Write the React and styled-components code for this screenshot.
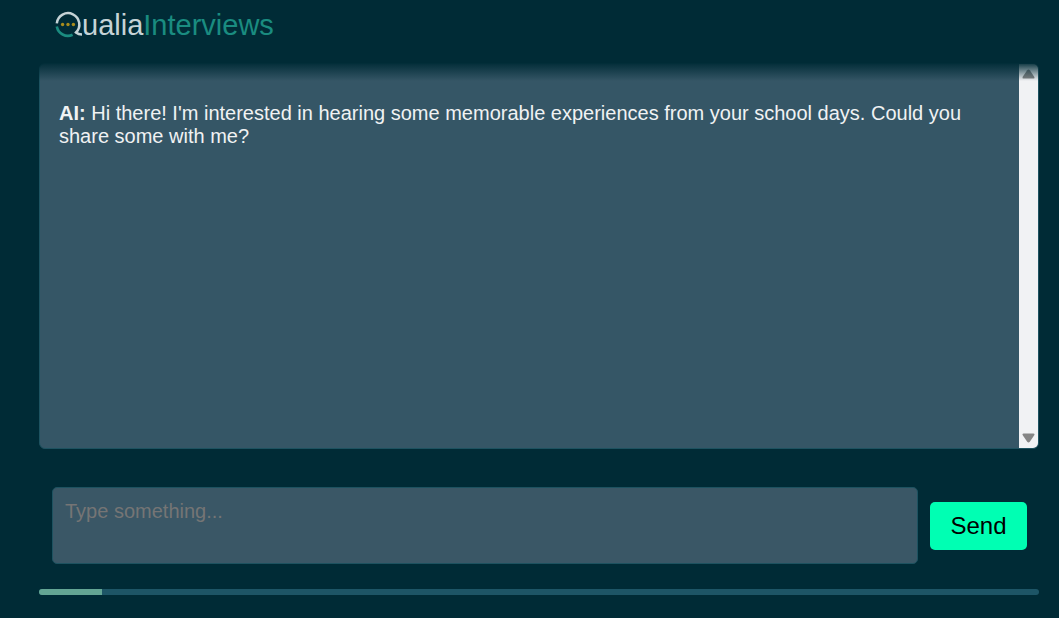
import React, { useState } from 'react';
import styled, { createGlobalStyle } from 'styled-components';

const GlobalStyle = createGlobalStyle`
  * {
    box-sizing: border-box;
  }
  body {
    margin: 0;
    background-color: #002b36;
    font-family: "Liberation Sans", Arial, sans-serif;
  }
`;

const Page = styled.div`
  display: flex;
  flex-direction: column;
  height: 100vh;
  padding: 0 20px 23px 39px;
`;

const Header = styled.header`
  display: flex;
  flex-shrink: 0;
  height: 63px;
  padding: 9px 15px;
`;

const Logo = styled.a`
  display: flex;
  align-items: flex-start;
  font-size: 29px;
  line-height: 32px;
  text-decoration: none;
  color: #c5d3d6;
`;

const LogoMark = styled.svg`
  width: 28px;
  height: 32px;
`;

const LogoAccent = styled.span`
  color: #1a8c80;
`;

const ChatArea = styled.main`
  position: relative;
  display: flex;
  flex: 1;
  min-height: 0;
`;

const ChatPanel = styled.div`
  display: flex;
  flex: 1;
  min-width: 0;
  border: 1px solid #1d5260;
  border-radius: 6px;
  background-color: #355666;
  overflow: hidden;
`;

const TopFade = styled.div`
  position: absolute;
  top: 0;
  left: 0;
  right: 0;
  height: 18px;
  background: linear-gradient(to bottom, rgba(0, 43, 54, 0.95), rgba(0, 43, 54, 0));
`;

const Messages = styled.div`
  flex: 1;
  min-width: 0;
  padding: 38px 19px;
  overflow: hidden;
`;

const Message = styled.p`
  margin: 0;
  font-size: 20px;
  line-height: 23px;
  color: #f0f2f3;
`;

const ScrollTrack = styled.div`
  display: flex;
  flex-direction: column;
  justify-content: space-between;
  align-items: center;
  width: 19px;
  padding: 5px 0;
  background-color: #f1f2f4;
`;

const Arrow = styled.svg`
  width: 13px;
  height: 10px;
  fill: #858585;
`;

const InputForm = styled.form`
  display: flex;
  flex-shrink: 0;
  align-items: center;
  gap: 12px;
  margin: 38px 12px 25px 13px;
`;

const TextArea = styled.textarea`
  flex: 1;
  min-width: 0;
  height: 77px;
  padding: 12px;
  border: 1px solid #1d5260;
  border-radius: 5px;
  background-color: #3a5766;
  color: #f0f2f3;
  font-family: inherit;
  font-size: 20px;
  line-height: 23px;
  resize: none;
  &::placeholder {
    color: #757575;
  }
`;

const SendButton = styled.button`
  min-width: 97px;
  height: 48px;
  padding: 0 20px;
  border: none;
  border-radius: 5px;
  background-color: #00ffb3;
  color: #000;
  font-family: inherit;
  font-size: 24px;
  line-height: 28px;
  cursor: pointer;
`;

const ProgressTrack = styled.div`
  flex-shrink: 0;
  height: 6px;
  border-radius: 3px;
  background-color: #1d5566;
  overflow: hidden;
`;

const ProgressFill = styled.div`
  height: 100%;
  background-color: #63a594;
`;

const QualiaLogo = () => (
  <Logo href="#" aria-label="QualiaInterviews">
    <LogoMark viewBox="0 0 28 32" fill="none">
      <path d="M2.8 14.3 A11.3 11.3 0 1 1 22 23.5 Q24.4 25.6 28 25.6" stroke="#c5d3d6" strokeWidth="2.5" />
      <path d="M2.8 17.5 A11.3 11.3 0 0 0 18.6 25.8" stroke="#1a8c80" strokeWidth="2.6" />
      <circle cx="8.6" cy="15.5" r="1.7" fill="#a88c1c" />
      <circle cx="14" cy="15.5" r="1.7" fill="#a88c1c" />
      <circle cx="19.4" cy="15.5" r="1.7" fill="#a88c1c" />
    </LogoMark>
    <span>ualia</span>
    <LogoAccent>Interviews</LogoAccent>
  </Logo>
);

const App = () => {
  const [text, setText] = useState('');
  const progress = 6.3;

  return (
    <>
      <GlobalStyle />
      <Page>
        <Header>
          <QualiaLogo />
        </Header>
        <ChatArea>
          <ChatPanel>
            <Messages>
              <Message>
                <strong>AI:</strong> Hi there! I'm interested in hearing some memorable experiences
                from your school days. Could you share some with me?
              </Message>
            </Messages>
            <ScrollTrack aria-hidden="true">
              <Arrow viewBox="0 0 13 10"><path d="M6.5 0.5 Q7.2 0.5 7.8 1.3 L12.4 8 Q13 9.5 11.5 9.5 H1.5 Q0 9.5 0.6 8 L5.2 1.3 Q5.8 0.5 6.5 0.5Z" /></Arrow>
              <Arrow viewBox="0 0 13 10"><path d="M6.5 9.5 Q7.2 9.5 7.8 8.7 L12.4 2 Q13 0.5 11.5 0.5 H1.5 Q0 0.5 0.6 2 L5.2 8.7 Q5.8 9.5 6.5 9.5Z" /></Arrow>
            </ScrollTrack>
          </ChatPanel>
          <TopFade />
        </ChatArea>
        <InputForm onSubmit={(e) => e.preventDefault()}>
          <TextArea
            aria-label="Message"
            placeholder="Type something..."
            value={text}
            onChange={(e) => setText(e.target.value)}
          />
          <SendButton type="submit">Send</SendButton>
        </InputForm>
        <ProgressTrack role="progressbar" aria-label="Interview progress" aria-valuenow={progress}>
          <ProgressFill style={{ width: `${progress}%` }} />
        </ProgressTrack>
      </Page>
    </>
  );
};

export default App;
